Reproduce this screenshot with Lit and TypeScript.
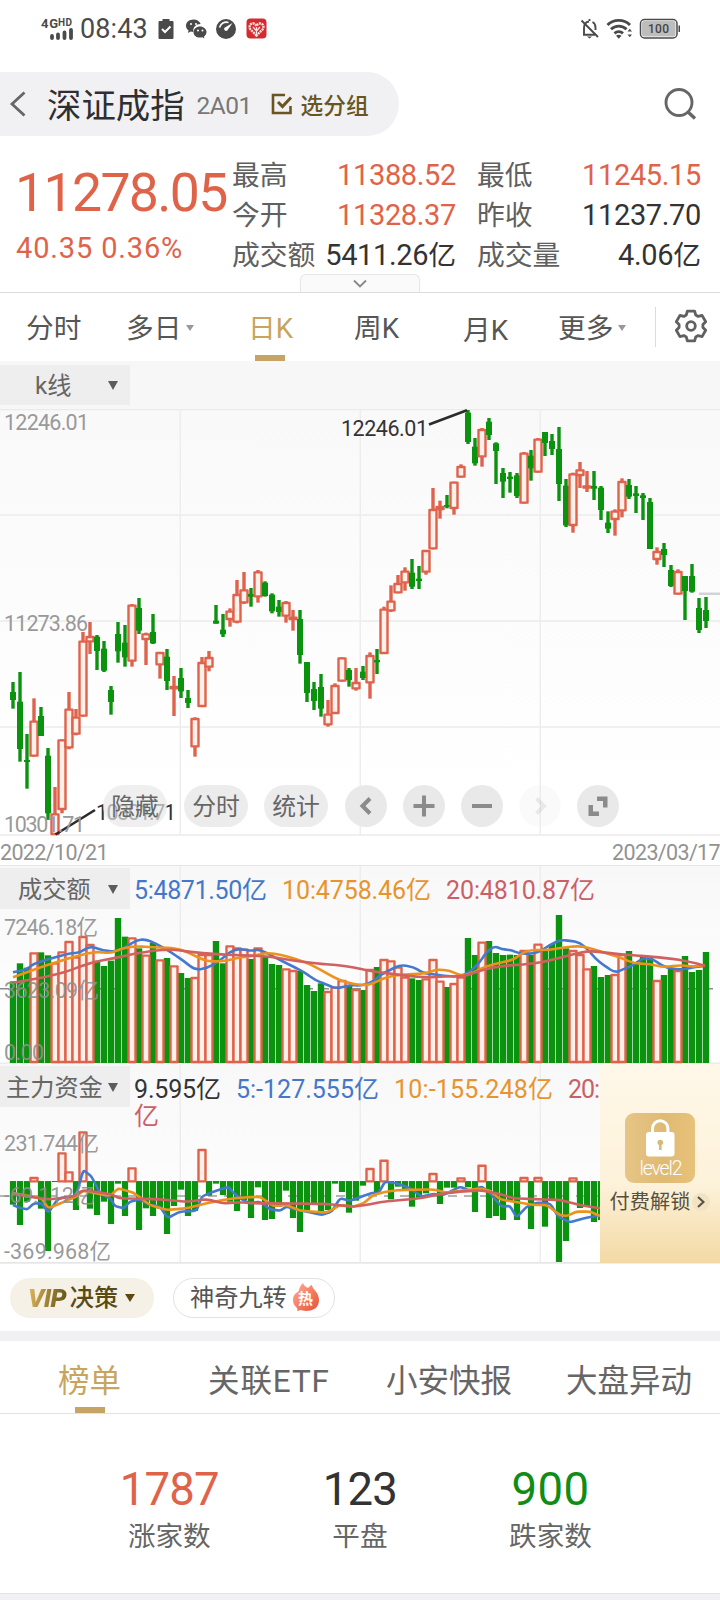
import { LitElement, html, svg, css } from "lit";
import { customElement } from "lit/decorators.js";

type Candle = [string, number, number, number, number];

// Candle rows: direction, high, body top, body bottom, low (thirds of a pixel from the pane top).
const CANDLES: Candle[] = `g 846 876 900 926|g 816 905 1047 1085|g 1002 1080 1086 1166|r 895 962 1070 1070|g 921 948 1008 1008|g 1044 1067 1240 1260|r 1161 1240 1305 1305|r 1018 1018 1230 1240|r 876 926 1045 1048|r 927 950 1004 1006|r 696 722 950 950|r 666 708 727 762|g 705 710 753 810|g 723 746 812 816|g 858 870 906 944|g 666 702 754 788|g 675 728 772 800|r 612 614 785 800|g 594 624 692 702|r 698 700 720 795|g 642 696 730 732|r 756 756 796 836|g 747 770 843 870|r 828 858 868 948|g 804 834 874 894|g 870 894 909 924|r 952 954 1042 1070|r 771 786 921 921|r 753 771 803 814|g 615 662 671 671|g 642 689 703 711|r 625 632 660 680|r 540 582 668 670|r 516 568 610 612|g 564 582 590 620|r 510 514 592 608|g 544 548 588 590|g 580 584 634 640|g 600 620 636 650|r 603 606 650 668|r 630 650 660 692|g 630 657 765 791|g 786 786 879 906|g 846 867 903 930|g 822 861 926 950|r 900 941 976 980|r 850 855 942 942|r 772 772 845 845|g 804 810 840 860|r 804 846 868 872|g 798 815 834 840|r 757 765 850 896|g 747 780 787 822|r 620 626 762 762|r 556 602 634 636|r 525 549 580 580|r 502 512 550 572|g 477 518 560 567|g 498 536 543 567|r 450 450 518 524|r 264 327 448 448|r 302 318 330 356|g 285 315 320 325|r 245 245 327 344|r 193 198 233 233|g 30 38 126 132|g 114 140 190 197|r 84 87 172 200|g 54 65 105 120|g 127 130 153 252|g 204 219 245 294|g 216 230 237 278|g 219 226 288 294|r 156 158 311 311|g 150 167 205 242|r 114 116 218 218|g 96 96 129 168|g 102 123 147 165|g 81 147 252 303|g 237 257 376 381|r 218 220 378 398|r 186 208 228 264|r 213 256 266 276|g 213 258 266 300|g 258 263 330 360|g 334 368 386 399|r 328 332 360 407|r 235 243 334 352|g 237 255 290 297|g 258 280 288 339|g 279 286 294 360|g 294 306 447 447|r 442 453 480 494|g 429 447 465 501|g 495 510 558 561|r 508 513 584 584|g 528 528 573 660|g 492 528 575 578|g 594 624 690 699|g 591 630 663 684`
  .split("|")
  .map((row) => {
    const [c, ...v] = row.split(" ");
    return [c, ...v.map(Number)] as Candle;
  });

const nums = (s: string) => s.split(" ").map(Number);

const VOLUME = nums(
  "424 370 383 337 337 346 368 334 303 350 288 312 362 378 362 234 290 292 325 344 308 358 354 376 399 414 411 342 342 303 370 316 322 326 357 322 348 372 375 385 390 393 435 453 430 453 440 420 435 447 450 387 381 357 361 380 410 415 420 415 357 422 441 429 410 294 345 305 303 339 345 344 345 330 345 311 330 312 225 325 330 342 385 378 411 405 402 342 333 370 350 354 420 405 385 390 348 396 390 336",
);

const FUND = nums(
  "1094 1155 1085 1012 1106 1233 1026 938 995 1110 875 1106 1125 1085 1152 1031 1128 983 1170 1105 1128 1106 1182 1098 1049 1128 1113 928 1067 1031 1065 1085 1113 1080 1134 1042 1140 1137 1100 1052 1134 1176 1110 1095 1120 1110 1031 1056 1118 1082 1037 985 1062 960 1078 1040 1053 1100 1073 1060 1000 1092 1043 1043 1013 1042 1116 975 1134 1128 1140 1086 1140 1012 1167 1012 1160 1083 1266 1203 1013 1104 1100 1146 1140 1130",
);

const VOL_MA: [string, string][] = [
  ["#4479d0", "39,397 80,388 100,372 150,356 210,340 240,338 270,318 310,332 350,335 380,320 410,300 438,298 470,312 510,335 550,362 585,390 620,385 660,362 690,335 720,326 755,333 780,328 820,350 870,375 910,395 945,420 980,434 1010,446 1050,435 1085,437 1120,425 1140,405 1170,390 1200,375 1240,380 1270,400 1300,402 1330,408 1380,410 1410,395 1440,366 1460,335 1485,318 1505,328 1535,330 1560,342 1610,340 1650,315 1680,300 1710,302 1740,308 1770,335 1785,355 1810,375 1845,398 1870,388 1900,375 1930,353 1960,358 1990,380 2040,390 2090,380 2115,378"],
  ["#ed921d", "39,412 100,390 150,372 240,345 290,335 330,340 360,328 400,318 460,322 530,325 570,340 610,360 640,365 680,362 720,352 760,348 800,338 850,345 920,368 960,388 1000,412 1040,428 1090,437 1120,430 1150,415 1190,405 1240,402 1280,400 1310,388 1350,392 1385,408 1420,398 1440,387 1480,372 1540,360 1565,340 1590,330 1650,330 1690,322 1740,318 1770,325 1820,340 1860,352 1900,370 1950,372 1990,382 2040,375 2080,380 2115,376"],
  ["#d16060", "39,428 100,418 150,408 200,395 270,368 340,355 400,342 460,332 520,328 570,336 640,342 720,346 800,348 870,360 940,370 1010,375 1060,382 1120,395 1190,403 1240,410 1300,412 1340,408 1390,410 1440,392 1500,378 1590,372 1650,362 1710,345 1770,332 1830,340 1890,345 1950,350 2010,355 2070,365 2115,378"],
];

const FUND_MA: [string, string][] = [
  ["#4479d0", "39,1095 60,1104 82,1108 102,1090 125,1090 145,1118 175,1075 228,1068 250,990 275,1010 300,1060 330,1075 345,1098 370,1105 390,1085 420,1078 450,1095 480,1100 503,1134 540,1115 590,1112 605,1070 640,1055 685,1040 700,1058 720,1075 750,1090 780,1085 810,1108 840,1112 860,1100 890,1110 920,1115 965,1125 995,1115 1020,1075 1050,1082 1090,1068 1120,1058 1135,1060 1155,1025 1190,1030 1230,1045 1265,1070 1300,1062 1330,1065 1380,1040 1410,1052 1445,1040 1470,1060 1505,1100 1530,1098 1550,1132 1580,1100 1610,1088 1650,1090 1675,1130 1710,1147 1750,1135 1800,1125"],
  ["#ed921d", "39,1060 125,1075 145,1105 200,1082 228,1070 250,1052 330,1068 355,1045 400,1058 430,1080 450,1095 500,1110 560,1105 620,1090 680,1078 720,1073 780,1070 820,1098 860,1095 900,1112 980,1118 1020,1095 1060,1100 1090,1090 1120,1065 1160,1055 1200,1050 1300,1048 1340,1058 1400,1050 1440,1046 1470,1052 1500,1078 1540,1085 1600,1095 1640,1095 1680,1125 1700,1128 1730,1115 1770,1115 1800,1128"],
  ["#d16060", "39,1062 100,1072 150,1078 220,1070 250,1050 330,1062 360,1075 480,1078 560,1085 620,1078 670,1090 720,1087 770,1090 850,1090 980,1092 1060,1100 1100,1095 1150,1085 1260,1075 1320,1062 1380,1055 1440,1051 1500,1062 1540,1075 1620,1078 1680,1080 1740,1095 1800,1105"],
];

const RED = "#df634c";
const GREEN = "#0b930f";
const X0 = 13;
const STEP = 7;

// Average line through the traced points, with only the corners rounded off.
function trace(points: string, top: number, round: number): string {
  const p = points.split(" ").map((s) => {
    const [x, y] = s.split(",").map(Number);
    return [x / 3, y / 3 - top];
  });
  const mix = (a: number[], b: number[], t: number) => `${a[0] + (b[0] - a[0]) * t} ${a[1] + (b[1] - a[1]) * t}`;
  let d = `M${p[0][0]} ${p[0][1]}`;
  for (let i = 1; i < p.length - 1; i++) {
    d += `L${mix(p[i], p[i - 1], round)}Q${p[i][0]} ${p[i][1]} ${mix(p[i], p[i + 1], round)}`;
  }
  const l = p[p.length - 1];
  return d + `L${l[0]} ${l[1]}`;
}

const bar = (i: number, y1: number, y2: number, up: boolean, half: number) => {
  const x = X0 + i * STEP;
  return up
    ? svg`<rect x=${x - 3.5} y=${y1 + 1} width="7" height=${Math.max(y2 - y1 - 2, 1)} fill="#fff0ea" stroke=${RED} stroke-width="2.4" stroke-linejoin="round"/>`
    : svg`<rect x=${x - half} y=${y1} width=${half * 2} height=${Math.max(y2 - y1, 1)} fill=${GREEN}/>`;
};

const verticals = (h: number) =>
  [180, 360, 540].map((x) => svg`<rect x=${x - 0.5} y="0" width="1.5" height=${h} fill="#ededee"/>`);

@customElement("kline-pane")
export class KlinePane extends LitElement {
  static styles = css`
    :host { display: block; height: 427px; background: linear-gradient(#f9f9fa, #fff 90%); position: relative; }
    svg { display: block; }
    .axis { font: 21.5px Roboto, "Noto Sans CJK SC", sans-serif; fill: #999; }
    .mark { font: 21.5px Roboto, "Noto Sans CJK SC", sans-serif; fill: #333; }
    .tools { position: absolute; left: 103px; bottom: 9px; display: flex; gap: 16px; height: 42px; }
    .pill { width: 64px; margin-right: 1px; border-radius: 21px; background: #e8e8e8b0; color: #666; font: 23.8px/40px "Noto Sans CJK SC", sans-serif; text-align: center; }
    .pill + .pill { background: #ececec; margin-right: 0; }
    .pill + .pill + .pill { margin-right: 1px; }
    .round { width: 42px; height: 42px; border-radius: 50%; background: #e9e9e9; display: block; }
    .faint { opacity: .18; }
  `;
  render() {
    return html`<svg width="720" height="427" viewBox="0 0 720 427">
        ${[0.5, 106, 212, 318, 426].map((y) => svg`<rect y=${y - 0.7} width="720" height="1.5" fill="#ebebec"/>`)}
        ${verticals(427)}
        <rect x="699" y="183.5" width="21" height="2.5" fill="#d3d3d6"/>
        ${CANDLES.map(([c, hi, t, b, lo], i) => {
          const up = c === "r";
          const y = (v: number) => v / 3 - 9;
          const x = X0 + i * STEP;
          return svg`<rect x=${x - 1.7} y=${y(hi)} width="3.4" height=${up ? y(t) - y(hi) + 1 : y(lo) - y(hi)} fill=${up ? RED : GREEN}/>
            ${up ? svg`<rect x=${x - 1.7} y=${y(b) - 1} width="3.4" height=${y(lo) - y(b) + 1} fill=${RED}/>` : ""}
            ${bar(i, y(t), y(b), up, 3)}`;
        })}
        <path d="M429 15.5L467 1.2M55.5 425.5L95 401" stroke="#2c2c2c" stroke-width="2.6"/>
        <text class="mark" x="341" y="27" textLength="87">12246.01</text>
        <text class="mark" x="96" y="411" textLength="80">10301.71</text>
        <text class="axis" x="4" y="21" textLength="85">12246.01</text>
        <text class="axis" x="4" y="222" textLength="84">11273.86</text>
        <text class="axis" x="4" y="423" textLength="81">10301.71</text>
      </svg>
      <div class="tools">
        <span class="pill">隐藏</span><span class="pill">分时</span><span class="pill">统计</span>
        ${["M25 13.5L17.5 21L25 28.5", "M10.500 21H31.500M21 10.500V31.500", "M11 21H31", "M17.500 13.500L25 21L17.500 28.500", ""].map(
          (d, i) => html`<svg class="round ${i === 3 ? "faint" : ""}" viewBox="0 0 42 42">
            ${i === 4
              ? svg`<path d="M20 11.500h10.500v11h-4.500v-6.500h-6zM11.500 20h4.500v6.500h6v4.500h-10.500z" fill="#8b8b8b"/>`
              : svg`<path d=${d} fill="none" stroke="#8b8b8b" stroke-width="4"/>`}
          </svg>`,
        )}
      </div>`;
  }
}

@customElement("indicator-pane")
export class IndicatorPane extends LitElement {
  static properties = { kind: {} };
  declare kind: string;
  static styles = css`
    :host { display: block; background: linear-gradient(#f8f8f9, #fff); overflow: hidden; }
    svg { display: block; }
    text { font-family: Roboto, "Noto Sans CJK SC", sans-serif; }
    .axis { font-size: 21.5px; fill: #8f8f8f; fill-opacity: .92; }
    .value { font-size: 25px; }
  `;
  private volume() {
    const y = (v: number) => v / 3 - 26;
    const bars = (up: boolean) =>
      VOLUME.map((v, i) => ((CANDLES[i][0] === "r") === up ? bar(i, y(v), 197, up, 3.2) : ""));
    return html`<svg width="720" height="198" viewBox="0 0 720 198">
      ${verticals(198)}
      <rect y="196.5" width="720" height="1.5" fill="#ececed"/>
      <path d="M0 122.700H713" stroke="#8d8d8d" stroke-width="1.500" stroke-dasharray="9 7"/>
      ${bars(false)}${bars(true)}
      ${VOL_MA.map(([c, p]) => svg`<path d=${trace(p, 26, 0.45)} fill="none" stroke=${c} stroke-width="2.600"/>`)}
      <text class="value" x="134" y="33" textLength="133" fill="#4577c9">5:4871.50亿</text>
      <text class="value" x="282" y="33" textLength="149" fill="#e8942c">10:4758.46亿</text>
      <text class="value" x="446" y="33" textLength="149" fill="#cb5f66">20:4810.87亿</text>
      <text class="axis" x="4" y="69" textLength="94">7246.18亿</text>
      <text class="axis" x="4" y="131.500" textLength="95">3623.09亿</text>
      <text class="axis" x="4" y="193.500" textLength="40">0.00</text>
    </svg>`;
  }
  private fund() {
    const y = (v: number) => v / 3 - 224;
    const zero = y(1024);
    const isUp = (v: number) => v < 1024;
    const bars = (up: boolean) =>
      FUND.map((v, i) => (isUp(v) === up ? (up ? bar(i, y(v) - 0.3, zero + 1, true, 3) : bar(i, zero - 0.3, y(v), false, 3.1)) : ""));
    return html`<svg width="600" height="199" viewBox="0 0 600 199">
      ${verticals(199)}
      <path d="M0 132H600" stroke="#9d9d9d" stroke-width="1.500" stroke-dasharray="9 7"/>
      ${bars(false)}${bars(true)}
      ${FUND_MA.map(([c, p]) => svg`<path d=${trace(p, 224, 0.2)} fill="none" stroke=${c} stroke-width="2.600"/>`)}
      <text class="value" x="134" y="33.500" textLength="87" fill="#333">9.595亿</text>
      <text class="value" x="236" y="33.500" textLength="143" fill="#4577c9">5:-127.555亿</text>
      <text class="value" x="394" y="33.500" textLength="159" fill="#e8942c">10:-155.248亿</text>
      <text class="value" x="568" y="33.500" textLength="32" fill="#cb5f66">20:</text>
      <text class="value" x="134" y="61" textLength="23" fill="#cb5f66">亿</text>
      <text class="axis" x="4" y="87" textLength="95">231.744亿</text>
      <text class="axis" x="4" y="139" textLength="91">-69.112亿</text>
      <text class="axis" x="4" y="195" textLength="107">-369.968亿</text>
      <rect y="198" width="600" height="1" fill="#e6e6e6"/>
    </svg>`;
  }
  render() {
    return this.kind === "volume" ? this.volume() : this.fund();
  }
}

@customElement("app-root")
export class AppRoot extends LitElement {
  static styles = css`
    :host { display: block; width: 720px; height: 1600px; overflow: hidden; background: #fff; color: #333; font-family: Roboto, "Noto Sans CJK SC", sans-serif; }
    * { box-sizing: border-box; }
    svg { display: block; flex: none; }
    .status { height: 72px; padding: 0 39px 15px 41px; display: flex; align-items: center; justify-content: space-between; }
    .status-group { display: flex; align-items: center; }
    .signal { width: 33px; margin-right: 6px; }
    .clock { font-size: 27px; line-height: 32px; color: #4a4a4a; letter-spacing: .1px; width: 78px; }
    .sg { font: 700 13px Roboto, sans-serif; fill: #4a4a4a; }
    .sg-hd { font: 700 10px Roboto, sans-serif; fill: #4a4a4a; }
    .icons { display: flex; gap: 9px; }
    .icons svg:nth-child(2) { margin-left: 2px; }
    .icons svg:nth-child(3) { margin-left: -3px; }
    .bat { font: 500 12px Roboto, sans-serif; fill: #444; }
    .header { height: 64px; display: flex; justify-content: space-between; align-items: center; padding-right: 22px; }
    .crumb { width: 399px; height: 64px; background: #f1f1f3; border-radius: 0 32px 32px 0; display: flex; align-items: center; padding-left: 9px; }
    .name { font-size: 34.4px; line-height: 50px; margin: 3px 0 0 20px; color: #2f2f31; white-space: nowrap; }
    .code { font-size: 24.5px; color: #777; margin: 2px 0 0 12px; width: 74px; letter-spacing: -.5px; }
    .group { font-size: 22.7px; font-weight: 500; color: #6a5520; margin-left: 8px; }
    .summary { height: 157px; display: flex; padding-top: 19px; position: relative; border-bottom: 1px solid #dcdcdc; }
    .last { width: 232px; padding-left: 15px; color: #df6349; white-space: nowrap; }
    .price { font-size: 53.5px; line-height: 62px; padding-top: 7px; letter-spacing: -1.6px; }
    .change { font-size: 29px; line-height: 36px; margin: 6px 0 0 1px; letter-spacing: .85px; }
    .facts { display: grid; grid-template-columns: 224px 224px; column-gap: 21px; grid-auto-rows: 40px; }
    .fact { display: flex; justify-content: space-between; font-size: 29px; line-height: 40px; white-space: nowrap; }
    .fact-name { font-size: 27.8px; color: #606060; line-height: 41px; }
    .num { letter-spacing: -.35px; }
    .cjk { font-size: 27.8px; letter-spacing: 0; }
    .up { color: #df6349; }
    .expand { position: absolute; left: 300px; bottom: 0; width: 120px; height: 18px; border: 1.5px solid #e6e6e6; border-bottom: 0; border-radius: 6px 6px 0 0; background: #fafafa; display: flex; justify-content: center; padding-top: 4px; }
    .periods { height: 68px; display: flex; align-items: stretch; padding-left: 26px; }
    .period { font-size: 27.7px; color: #565656; display: flex; align-items: center; gap: 5px; white-space: nowrap; padding-bottom: 2px; }
    .p0 { width: 100px; } .p1 { width: 122px; } .p2 { width: 106px; } .p3 { width: 109px; } .p4 { width: 95px; padding: 1px 0 0; } .p5 { width: 97px; }
    .on { color: #c8a55c; position: relative; }
    .on::after { content: ""; position: absolute; height: 6px; width: 30px; bottom: 0; left: 7px; background: #c6a466; }
    .tri { width: 0; height: 0; margin-top: 3px; border: 4.5px solid transparent; border-top: 6px solid #999; border-bottom: 0; }
    .tri-dark { width: 0; height: 0; margin-top: -2px; border: 5.5px solid transparent; border-top: 9px solid #5c5c5c; border-bottom: 0; }
    .gear-cell { border-left: 1.5px solid #dcdcdc; margin: 14px 0 14px; padding: 2px 0 0 19px; }
    .bar { height: 48px; background: #f7f7f8; padding-top: 4px; }
    .tag { width: 130px; height: 40px; background: #eeeeee; color: #666; display: flex; align-items: center; justify-content: space-between; padding: 2px 12px 0 35px; font-size: 24.2px; line-height: 38px; white-space: nowrap; }
    .dates { height: 30px; border-bottom: 1px solid #e6e6e6; display: flex; justify-content: space-between; color: #929292; font-size: 21.5px; line-height: 34px; letter-spacing: -.65px; }
    .pane { position: relative; display: flex; }
    .pane .tag { position: absolute; left: 0; top: 2px; height: 41px; padding-top: 3px; }
    .pane .tag-vol { padding-left: 18px; } .pane .tag-fund { padding-left: 6px; }
    .unlock { width: 120px; height: 199px; background: linear-gradient(#fff8e9, #fdf2da 60%, #f3d9a4); display: flex; flex-direction: column; align-items: center; padding-top: 49px; }
    .lv { font: 300 19.5px Roboto, sans-serif; fill: #fff; }
    .pay { display: flex; align-items: center; gap: 2px; font-size: 20.2px; line-height: 38px; color: #57503f; }
    .chips { height: 68px; display: flex; align-items: center; gap: 19px; padding: 0 10px 0; border-top: 1px solid #eee; }
    .chip { height: 40px; border-radius: 20px; display: flex; align-items: center; font-size: 24.2px; line-height: 40px; }
    .vip { width: 144px; background: #f5f1e6; color: #5c4a14; font-weight: 500; padding-left: 18px; gap: 3px; }
    .vip-mark { font: italic 900 25.5px/38px Roboto, sans-serif; background: linear-gradient(100deg, #e2bd5a, #5c4a14); -webkit-background-clip: text; color: transparent; padding-right: 1px; letter-spacing: -.7px; }
    .vip-tri { margin-left: 4px; width: 0; height: 0; border: 5px solid transparent; border-top: 8px solid #5c4a14; border-bottom: 0; }
    .nine { width: 162px; border: 1px solid #e2e2e2; color: #555; padding-left: 16px; gap: 5px; white-space: nowrap; }
    .hot { font: 700 15px "Noto Sans CJK SC", sans-serif; fill: #fff; }
    .band { height: 10px; background: #f1f1f3; }
    .lists { height: 73px; display: flex; border-bottom: 1.5px solid #e2e2e2; font-size: 31.5px; line-height: 81px; color: #666; white-space: nowrap; }
    .l0 { width: 208px; padding-left: 58px; color: #c8a55c; position: relative; }
    .l1 { width: 178px; letter-spacing: .9px; } .l2 { width: 180px; }
    .l0::after { content: ""; position: absolute; width: 30px; height: 6px; left: 75px; bottom: 0; background: #c6a466; }
    .counts { height: 180px; padding: 49px 74px 0; display: grid; grid-template-columns: repeat(3, 190.6px); border-bottom: 1px solid #e4e4e4; text-align: center; }
    .count { font-size: 45.500px; line-height: 54px; letter-spacing: -.8px; }
    .count-name { font-size: 27.600px; line-height: 36px; color: #666; margin-top: 2px; }
    .down { color: #118c14; letter-spacing: .4px; }
    .foot { height: 8px; background: #f1f1f3; }
  `;

  private fact(name: string, value: string, unit: string, up: boolean) {
    return html`<div class="fact"><span class="fact-name">${name}</span><span class="num ${up ? "up" : ""}">${value}${unit ? html`<span class="cjk">${unit}</span>` : ""}</span></div>`;
  }

  private gear() {
    const pts: string[] = [];
    const n = 6;
    for (let k = 0; k < n; k++) {
      const a = (k * 2 * Math.PI) / n;
      for (const [r, o] of [[12, -0.4], [15.3, -0.24], [15.3, 0.24], [12, 0.4]] as const) {
        pts.push(`${16 + r * Math.sin(a + o)},${17 - r * Math.cos(a + o)}`);
      }
    }
    return html`<svg width="32" height="34" viewBox="0 0 32 34"><polygon points=${pts.join(" ")} fill="none" stroke="#606060" stroke-width="2.800" stroke-linejoin="round"/><circle cx="16" cy="17" r="4.300" fill="none" stroke="#606060" stroke-width="2.800"/></svg>`;
  }

  render() {
    return html`
      <div class="status">
        <div class="status-group">
          <svg class="signal" width="33" height="24" viewBox="0 0 33 24">
            <text class="sg" x="0" y="10.500" textLength="17">4G</text>
            <text class="sg-hd" x="17" y="8.500" textLength="14">HD</text>
            <path d="M11 21V19M17 21V17.500M23.500 21V15.500M30 21V13" stroke="#4a4a4a" stroke-width="3.800" stroke-linecap="round"/>
          </svg>
          <span class="clock">08:43</span>
          <div class="icons">
            <svg width="16" height="22" viewBox="0 0 16 22"><path d="M1.500 3H4.500V1H11.500V3H14.500Q15.500 3 15.500 4V20Q15.500 21 14.500 21H1.500Q.5 21 .5 20V4Q.5 3 1.500 3Z" fill="#4a4a4a"/><path d="M4 11l3 3l5.500-5.500" fill="none" stroke="#fff" stroke-width="2"/></svg>
            <svg width="24" height="22" viewBox="0 0 24 22"><path d="M8.500 1.500c-4.500 0-7.500 2.800-7.500 6.300 0 2 1 3.700 2.600 4.800l-.8 2.400 2.900-1.500c.8.2 1.700.4 2.600.4-.7-4.800 3-8 7.400-7.900-.9-2.700-3.700-4.500-7.200-4.500z" fill="#4a4a4a"/><path d="M15.500 7.400c-3.800 0-6.500 2.500-6.500 5.600s2.700 5.600 6.500 5.600c.8 0 1.600-.1 2.300-.3l2.200 1.300-.6-2c1.600-1.100 2.600-2.700 2.600-4.600 0-3.100-2.900-5.600-6.500-5.600z" fill="#4a4a4a" transform="translate(-.5 1)"/><g fill="#fff"><circle cx="6" cy="6" r="1"/><circle cx="11" cy="6" r="1"/><circle cx="13" cy="12.500" r="1"/><circle cx="17.500" cy="12.500" r="1"/></g></svg>
            <svg width="22" height="22" viewBox="0 0 22 22"><circle cx="11" cy="11" r="10" fill="#4a4a4a"/><path d="M4.500 9.500a7 7 0 0 1 9-5" fill="none" stroke="#fff" stroke-width="1.600"/><path d="M17.500 5l-5.200 7.500a2 2 0 0 1-2.800-2.800z" fill="#fff"/></svg>
            <svg width="21" height="21" viewBox="0 0 21 21"><rect x=".5" y=".5" width="20" height="20" rx="4" fill="#d42a30"/><path d="M10.500 17.500L4.500 11.500C2.500 9 4 5 7.500 5.500Q9.500 6 10.500 8Q11.500 6 13.500 5.500C17 5 18.500 9 16.500 11.500Z" fill="none" stroke="#ffe3dc" stroke-width="2.400" stroke-dasharray="2 .7"/><path d="M7 9l3.500 4L14 9M10.500 9v7" fill="none" stroke="#ffe3dc" stroke-width="1.300"/></svg>
          </div>
        </div>
        <div class="status-group">
          <svg width="20" height="22" viewBox="0 0 20 22"><path d="M4 16.500V10C4 6.500 6 4 9 3.500M12.500 4C14.500 5 15.500 7 15.500 9.500V12M3 16.700H15M9.500 1V3M1.500 2.500L18 19" fill="none" stroke="#4a4a4a" stroke-width="1.900"/><path d="M7 18.500h5l-2.500 2z" fill="#4a4a4a"/></svg>
          <svg width="32" height="22" viewBox="-2 0 32 22"><g fill="none" stroke="#4a4a4a" stroke-width="2.900"><path d="M5.500 7A16 16 0 0 1 28 7"/><path d="M9 11.300A11 11 0 0 1 24.500 11.300"/><path d="M12.500 15.300A6.500 6.500 0 0 1 21 15.300"/></g><path d="M14 17.800a4.500 4.500 0 0 1 5.500 0l-2.700 3zM25.500 13.500l2.300-2.800 2.300 2.800zM25.500 16.500l2.300 2.800 2.300-2.800z" fill="#4a4a4a"/></svg>
          <svg width="49" height="22" viewBox="0 0 49 22"><rect x="8.500" y="1.500" width="36.500" height="18.500" rx="4" fill="#fff" stroke="#4a4a4a" stroke-width="1.500"/><rect x="10" y="3" width="33.500" height="15.500" rx="2.500" fill="#bdbdbd"/><rect x="46.500" y="7.500" width="1.500" height="6.500" fill="#4a4a4a"/><text class="bat" x="16" y="15.200" textLength="21">100</text></svg>
        </div>
      </div>

      <div class="header">
        <div class="crumb">
          <svg width="18" height="28" viewBox="0 0 18 28"><path d="M15.500 2.500L3 14L15.500 25.500" fill="none" stroke="#666" stroke-width="2.800"/></svg>
          <span class="name">深证成指</span>
          <span class="code">2A01</span>
          <svg width="22" height="22" viewBox="0 0 22 22"><path d="M14 2H2V20H19.500V13" fill="none" stroke="#6a5520" stroke-width="2.600"/><path d="M7 9l4.500 4.500L20 4.500" fill="none" stroke="#6a5520" stroke-width="3"/></svg>
          <span class="group">选分组</span>
        </div>
        <svg width="34" height="34" viewBox="0 0 34 34"><circle cx="15" cy="15.500" r="13" fill="none" stroke="#666" stroke-width="2.900"/><path d="M23.500 24.500L31 31.500" stroke="#666" stroke-width="3.400"/></svg>
      </div>

      <div class="summary">
        <div class="last">
          <div class="price">11278.05</div>
          <div class="change">40.35 0.36%</div>
        </div>
        <div class="facts">
          ${this.fact("最高", "11388.52", "", true)} ${this.fact("最低", "11245.15", "", true)}
          ${this.fact("今开", "11328.37", "", true)} ${this.fact("昨收", "11237.70", "", false)}
          ${this.fact("成交额", "5411.26", "亿", false)} ${this.fact("成交量", "4.06", "亿", false)}
        </div>
        <div class="expand"><svg width="14" height="9" viewBox="0 0 14 9"><path d="M1 1.500L7 7.500L13 1.500" fill="none" stroke="#888" stroke-width="1.900"/></svg></div>
      </div>

      <div class="periods">
        <div class="period p0">分时</div>
        <div class="period p1">多日<i class="tri"></i></div>
        <div class="period p2 on">日K</div>
        <div class="period p3">周K</div>
        <div class="period p4">月K</div>
        <div class="period p5">更多<i class="tri"></i></div>
        <div class="gear-cell">${this.gear()}</div>
      </div>
      <div class="bar"><div class="tag">k线<i class="tri-dark"></i></div></div>
      <kline-pane></kline-pane>
      <div class="dates"><span>2022/10/21</span><span>2023/03/17</span></div>
      <div class="pane">
        <indicator-pane kind="volume"></indicator-pane>
        <div class="tag tag-vol">成交额<i class="tri-dark"></i></div>
      </div>
      <div class="pane">
        <indicator-pane kind="fund"></indicator-pane>
        <div class="tag tag-fund">主力资金<i class="tri-dark"></i></div>
        <div class="unlock">
          <svg width="70" height="70" viewBox="0 0 70 70">
            <defs><linearGradient id="gold"><stop stop-color="#e6c587"/><stop offset=".55" stop-color="#dfba73"/><stop offset="1" stop-color="#e8c27a"/></linearGradient></defs>
            <rect width="70" height="70" rx="9" fill="url(#gold)"/>
            <path d="M27.500 20V15.500a7.700 7.700 0 0 1 15.400 0V20" fill="none" stroke="#fff" stroke-width="3"/>
            <rect x="21" y="19" width="28.500" height="24.500" rx="3" fill="#fff"/>
            <circle cx="35.300" cy="29.500" r="2.800" fill="#d9b978"/><rect x="34" y="30" width="2.600" height="7" fill="#d9b978"/>
            <text class="lv" x="14.500" y="61.500" textLength="43">level2</text>
          </svg>
          <div class="pay">付费解锁<svg width="18" height="18" viewBox="0 0 18 18"><circle cx="9" cy="9" r="9" fill="#f2e3c5"/><path d="M6 4L11.500 9L6 14" fill="none" stroke="#57503f" stroke-width="2"/></svg></div>
        </div>
      </div>

      <div class="chips">
        <div class="chip vip"><span class="vip-mark">VIP</span>决策<i class="vip-tri"></i></div>
        <div class="chip nine">神奇九转
          <svg width="28" height="30" viewBox="0 0 28 30"><defs><linearGradient id="fire" x1="0" y1="0" x2="1" y2="1"><stop stop-color="#ffb09a"/><stop offset="1" stop-color="#e94f31"/></linearGradient></defs><path d="M8 4C9 2 10 1 11 0C12 3 14 4 16 5C18 3 19 2 20 2C20 6 27 9 27 17C27 24 22 28 14 28C11 28 9 27 9 27L5 28C6 26 5 25 4 24C2 22 1 20 1 17C1 13 3 10 6 9C7 8 7 6 8 4Z" fill="url(#fire)"/><text class="hot" x="6" y="21">热</text></svg>
        </div>
      </div>
      <div class="band"></div>
      <div class="lists">
        <div class="l0">榜单</div><div class="l1">关联ETF</div><div class="l2">小安快报</div><div class="l3">大盘异动</div>
      </div>
      <div class="counts">
        <div><div class="count up">1787</div><div class="count-name">涨家数</div></div>
        <div><div class="count">123</div><div class="count-name">平盘</div></div>
        <div><div class="count down">900</div><div class="count-name">跌家数</div></div>
      </div>
      <div class="foot"></div>`;
  }
}
